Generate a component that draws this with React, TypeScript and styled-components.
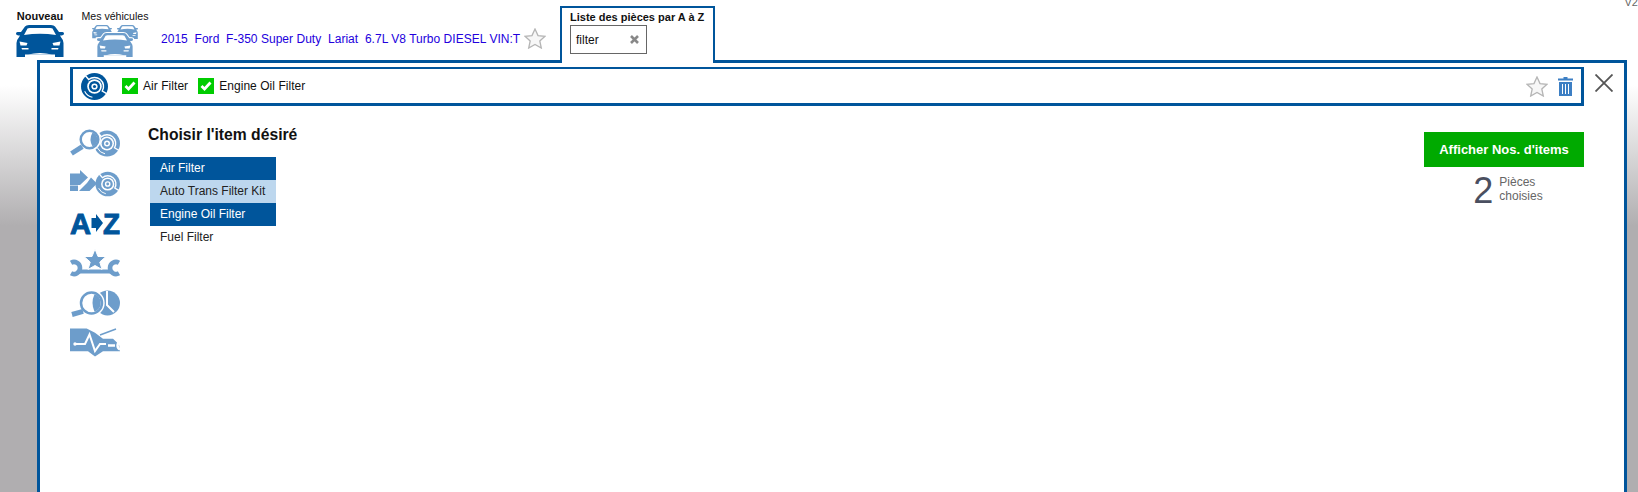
import React from "react"
import styled, { createGlobalStyle } from "styled-components"

const BLUE = "#00559b"
const MID = "#6d9dcb"

const GlobalStyle = createGlobalStyle`
    html, body, #root {
        height: 100%;
        margin: 0;
    }
    body {
        overflow: hidden;
        font-family: "Liberation Sans", Arial, sans-serif;
        color: #111;
        background: linear-gradient(#fff 85px, #b0aeb0 226px) no-repeat #b0aeb0;
    }
`

const Page = styled.div`
    display: flex;
    flex-direction: column;
    height: 100%;
    box-sizing: border-box;
    padding-right: 11px;
`

const Header = styled.header`
    display: flex;
    align-items: flex-start;
    height: 60px;
    margin-right: -11px;
    padding: 0 11px 0 16px;
    background: #fff;
    position: relative;
`

const NavItem = styled.div<{ $width: number; $gap: number }>`
    display: flex;
    flex-direction: column;
    align-items: center;
    width: ${p => p.$width}px;
    margin-right: ${p => p.$gap}px;
    padding-top: 10px;
    font-size: 11px;
    line-height: 13px;
    white-space: nowrap;
`

const NavLabel = styled.span<{ $bold?: boolean }>`
    font-weight: ${p => (p.$bold ? "bold" : "normal")};
    font-size: ${p => (p.$bold ? 11 : 10.6)}px;
    margin-bottom: 1px;
`

const NavIcon = styled.svg<{ $offset?: number }>`
    display: block;
    margin-top: ${p => p.$offset ?? 0}px;
`

const Vehicle = styled.div`
    display: flex;
    align-items: center;
    gap: 4px;
    width: 399px;
    height: 20px;
    margin-top: 28px;
`

const VehicleLink = styled.a`
    padding-top: 2px;
    color: #2200dd;
    font-size: 12px;
    letter-spacing: 0.03px;
    white-space: pre;
    text-decoration: none;
`

const SearchTab = styled.div`
    box-sizing: border-box;
    width: 155px;
    height: 57px;
    margin-top: 6px;
    padding: 3px 0 0 8px;
    border: solid ${BLUE};
    border-width: 2px 2px 0;
    background: #fff;
    position: relative;
    z-index: 1;
`

const TabLabel = styled.div`
    font-size: 11px;
    line-height: 13px;
    font-weight: bold;
    white-space: nowrap;
    margin-bottom: 1px;
`

const SearchBox = styled.div`
    box-sizing: border-box;
    display: flex;
    align-items: center;
    justify-content: space-between;
    width: 77px;
    height: 29px;
    padding: 0 7px 0 5px;
    border: 1px solid #666;
    font-size: 12px;
`

const Version = styled.span`
    position: absolute;
    top: -4px;
    right: -6px;
    font-size: 11px;
    line-height: 13px;
    color: #666;
`

const Panel = styled.main`
    flex: 1;
    box-sizing: border-box;
    margin-left: 37px;
    padding: 4px 40px 0 30px;
    border: solid ${BLUE};
    border-width: 3px 3px 0;
    background: #fff;
    position: relative;
`

const Toolbar = styled.div`
    box-sizing: border-box;
    display: flex;
    align-items: center;
    width: 100%;
    height: 39px;
    padding: 0 8px;
    border: solid ${BLUE};
    border-width: 2px 3px 3px;
`

const BrakeMark = styled.svg`
    margin-right: 13px;
`

const Chip = styled.span`
    display: flex;
    align-items: center;
    gap: 5px;
    margin-right: 10px;
    font-size: 12px;
    letter-spacing: 0.05px;
`

const CheckBox = styled.span`
    display: inline-flex;
    align-items: center;
    justify-content: center;
    width: 16px;
    height: 16px;
    background: #00cc00;
`

const ToolbarActions = styled.div`
    display: flex;
    align-items: center;
    gap: 10px;
    margin-left: auto;
`

const CloseButton = styled.button`
    position: absolute;
    top: 11px;
    right: 11px;
    padding: 0;
    border: 0;
    background: none;
    line-height: 0;
`

const Body = styled.div`
    display: flex;
    align-items: flex-start;
    padding-top: 17px;
`

const IconRail = styled.nav`
    display: flex;
    flex-direction: column;
    width: 50px;
    margin-right: 28px;
`

const RailIcon = styled.svg`
    display: block;
    width: 50px;
    height: 40px;
`

const Chooser = styled.section`
    flex: 1;
`

const Title = styled.h2`
    margin: 2px 0 12px;
    font-size: 15.7px;
    line-height: 20px;
    font-weight: bold;
`

const ItemList = styled.ul`
    width: 126px;
    margin: 0 0 0 2px;
    padding: 0;
    list-style: none;
`

const Item = styled.li<{ $state?: "selected" | "hover" }>`
    height: 23px;
    padding-left: 10px;
    font-size: 12px;
    line-height: 23px;
    white-space: nowrap;
    color: ${p => (p.$state === "selected" ? "#fff" : "#222")};
    background: ${p =>
        p.$state === "selected" ? BLUE : p.$state === "hover" ? "#bdd7ee" : "transparent"};
`

const Summary = styled.aside`
    display: flex;
    flex-direction: column;
    align-items: center;
    width: 160px;
    padding-top: 9px;
`

const ShowButton = styled.button`
    width: 160px;
    height: 35px;
    padding: 0;
    border: 0;
    background: #00aa00;
    color: #fff;
    font: bold 13px "Liberation Sans", Arial, sans-serif;
`

const Count = styled.div`
    display: flex;
    align-items: center;
    gap: 6px;
    margin-top: 8px;
    margin-left: 8px;
    color: #666;
    font-size: 12px;
    line-height: 14px;
`

const CountNumber = styled.span`
    font-size: 36px;
    line-height: 32px;
    color: #4a4f60;
`

const CountLabel = styled.span`
    margin-bottom: 4px;
`

const Car = ({ x = 0, y = 0, w = 48, color = BLUE, outlined = false }: { x?: number; y?: number; w?: number; color?: string; outlined?: boolean }) => (
    <g transform={`translate(${x} ${y}) scale(${w / 48})`}>
        <path
            fill={color}
            stroke={outlined ? "#fff" : "none"}
            strokeWidth={outlined ? 2.5 : 0}
            paintOrder="stroke"
            d="M9 1.5Q10 0 13 0H35Q38 0 39 1.5L43 7H46.5Q48 7 48 8.5Q48 10.5 44 10.5L45.5 13Q47.5 15 47.5 18V32H39V29.5H9V32H.5V18Q.5 15 2.5 13L4 10.5Q0 10.5 0 8.5Q0 7 1.5 7H5Z"
        />
        <path fill="#fff" d="M11.5 3.5Q12 3 14 3H34Q36 3 36.5 3.5L40 10Q24 7.5 8 10Z" />
        <path fill="#fff" d="M3.5 16.5L11.5 18L10.5 20.5H4.5ZM44.5 16.5L36.5 18L37.5 20.5H43.5ZM5.5 23H12.5V24.5H6ZM42.5 23H35.5V24.5H42Z" />
        <path fill="#fff" d="M12 29.5Q24 26.5 36 29.5Z" />
    </g>
)

const Star = () => (
    <svg width="22" height="21" viewBox="0 0 22 21">
        <path
            d="M11 1L14 7.6L21 8.3L15.8 13L17.3 20L11 16.4L4.7 20L6.2 13L1 8.3L8 7.6Z"
            fill="#f7f7f7"
            stroke="#b5b5b5"
            strokeWidth="1.3"
        />
    </svg>
)

// brake disc with its caliper, drawn for r = 13 and scaled
const Disc = ({ cx, cy, r, color }: { cx: number; cy: number; r: number; color: string }) => (
    <g transform={`translate(${cx} ${cy}) scale(${r / 13})`}>
        <circle r="13" fill={color} />
        <path d="M-8.7 -10.3L-5.6 -6.7A8.7 8.7 0 0 1 7.5 4.35L11.7 6.75" fill="none" stroke="#fff" strokeWidth="1.4" />
        <path d="M-9.5 4.5A10.5 10.5 0 0 0 -2 10.3" fill="none" stroke="#fff" strokeWidth="1" />
        <circle r="7" fill="#fff" />
        <circle r="5.4" fill={color} />
        <circle r="3" fill="#fff" />
        <circle r="1.5" fill={color} />
    </g>
)

type LensProps = { cx: number; cy: number; r: number; ex: number; ey: number }

const Lens = ({ cx, cy, r, ex, ey }: LensProps) => (
    <g>
        <circle cx={cx} cy={cy} r={r + 1.5} fill="#fff" />
        <circle cx={cx} cy={cy} r={r - 1.2} fill="#fff" stroke={MID} strokeWidth="2.5" />
        <path
            d={`M${cx + 3} ${cy - r + 3}A${r - 2.5} ${r - 2.5} 0 0 1 ${cx + 3} ${cy + r - 3}Q${cx - 1} ${cy} ${cx + 3} ${cy - r + 3}Z`}
            fill={MID}
        />
        <path d={`M${cx - r * 0.72} ${cy + r * 0.72}L${ex} ${ey}`} stroke={MID} strokeWidth="5" />
    </g>
)

const InspectBrakeIcon = () => (
    <RailIcon viewBox="0 0 50 40">
        <g transform="translate(0 6.5)">
            <Disc cx={37} cy={14} r={13} color={MID} />
            <Lens cx={19.5} cy={10} r={10} ex={1.5} ey={24} />
        </g>
    </RailIcon>
)

const ArrowBrakeIcon = () => (
    <RailIcon viewBox="0 0 50 40">
        <g transform="translate(0 7)" fill={MID}>
            <Disc cx={37.7} cy={14} r={12.3} color={MID} />
            <path d="M0 3.5H10V0L18 7.5L10 15H0Z" />
            <path d="M0 15.5H8V21H0ZM9 21L17 13L21 7.5L27 13.5L19.5 21Z" />
        </g>
    </RailIcon>
)

const AzIcon = () => (
    <RailIcon viewBox="0 0 50 40">
        <g fill={BLUE} stroke={BLUE} strokeWidth="1" fontFamily="'Liberation Sans', Arial, sans-serif" fontWeight="bold" fontSize="30">
            <text x="0" y="31" textLength="21" lengthAdjust="spacingAndGlyphs">A</text>
            <text x="33" y="31" textLength="17" lengthAdjust="spacingAndGlyphs">Z</text>
        </g>
        <path d="M21.5 15H26V11L33 20L26 29V25H21.5Z" fill={BLUE} />
    </RailIcon>
)

const WrenchStarIcon = () => (
    <RailIcon viewBox="0 0 50 40">
        <g transform="translate(0 6)">
            <path d="M9 22.5H41" stroke={MID} strokeWidth="4" />
            <path d="M1 13.8A6 6 0 1 1 1 24.2" fill="none" stroke={MID} strokeWidth="4.6" />
            <path d="M49 13.8A6 6 0 1 0 49 24.2" fill="none" stroke={MID} strokeWidth="4.6" />
            <path
                d="M25 0L28 7.5H36L29.8 13L32 20.5L25 16.5L18 20.5L20.2 13L14 7.5H22Z"
                fill={MID}
                stroke="#fff"
                strokeWidth="1"
            />
        </g>
    </RailIcon>
)

const ClockIcon = () => (
    <RailIcon viewBox="0 0 50 40">
        <g transform="translate(0 7)">
            <circle cx="37.5" cy="13" r="12.5" fill={MID} />
            <path d="M37 1V15L44 22" fill="none" stroke="#fff" strokeWidth="2" />
            <Lens cx={21.5} cy={13} r={11.7} ex={2} ey={24.5} />
        </g>
    </RailIcon>
)

const DiagnosticIcon = () => (
    <RailIcon viewBox="0 0 50 40">
        <g transform="translate(0 5.5)">
            <path fill={MID} d="M0 0H16.7L25 4.3L33 10.3H43L49 16L50 22.7H33L25 28L18 22.7H0Z" />
            <path d="M30 6.5L46 .5" stroke={MID} strokeWidth="1.5" />
            <path d="M6 15.5H15L19.5 6L25 22.5L30 15.5H36" fill="none" stroke="#fff" strokeWidth="2" />
            <circle cx="5" cy="15.5" r="1.7" fill="#fff" />
            <path d="M38 17H45" stroke="#fff" strokeWidth="2.5" />
            <path d="M50 13A4.5 4.5 0 0 0 50 21" fill="none" stroke="#fff" strokeWidth="2.5" />
        </g>
    </RailIcon>
)

const selectedItems = ["Air Filter", "Engine Oil Filter"]

const items: { label: string; state?: "selected" | "hover" }[] = [
    { label: "Air Filter", state: "selected" },
    { label: "Auto Trans Filter Kit", state: "hover" },
    { label: "Engine Oil Filter", state: "selected" },
    { label: "Fuel Filter" },
]

export default function App() {
    return (
        <>
            <GlobalStyle />
            <Page>
                <Header>
                    <NavItem $width={48} $gap={18}>
                        <NavLabel $bold>Nouveau</NavLabel>
                        <NavIcon $offset={1} width="48" height="33" viewBox="0 0 48 33">
                            <Car />
                        </NavIcon>
                    </NavItem>
                    <NavItem $width={66} $gap={13}>
                        <NavLabel>Mes véhicules</NavLabel>
                        <NavIcon width="48" height="34" viewBox="0 0 48 34">
                            <Car x={1} y={1} w={20} color={MID} />
                            <Car x={26} y={1} w={21} color={MID} />
                            <Car x={6} y={9} w={36} color={MID} outlined />
                        </NavIcon>
                    </NavItem>
                    <Vehicle>
                        <VehicleLink>{"2015\u00a0 Ford\u00a0 F-350 Super Duty\u00a0 Lariat\u00a0 6.7L V8 Turbo DIESEL VIN:T"}</VehicleLink>
                        <Star />
                    </Vehicle>
                    <SearchTab>
                        <TabLabel>Liste des pièces par A à Z</TabLabel>
                        <SearchBox>
                            <span>filter</span>
                            <svg width="9" height="9" viewBox="0 0 9 9">
                                <path d="M1 1L8 8M8 1L1 8" stroke="#888" strokeWidth="2.6" />
                            </svg>
                        </SearchBox>
                    </SearchTab>
                    <Version>V21</Version>
                </Header>
                <Panel>
                    <Toolbar>
                        <BrakeMark width="28" height="27" viewBox="0 0 28 27">
                            <Disc cx={13.5} cy={13.5} r={13.5} color={BLUE} />
                        </BrakeMark>
                        {selectedItems.map(label => (
                            <Chip key={label}>
                                <CheckBox>
                                    <svg width="12" height="10" viewBox="0 0 12 10">
                                        <path d="M1.5 5L4.5 8L10.5 1.5" fill="none" stroke="#fff" strokeWidth="2.8" />
                                    </svg>
                                </CheckBox>
                                {label}
                            </Chip>
                        ))}
                        <ToolbarActions>
                            <Star />
                            <svg width="15" height="19" viewBox="0 0 15 19">
                                <path
                                    fillRule="evenodd"
                                    fill="#3d7fc4"
                                    d="M5.5 0H9.5V1.5H15V3.5H0V1.5H5.5ZM1 5H14V19H1ZM4 7V17H5V7ZM7 7V17H8V7ZM10 7V17H11V7Z"
                                />
                            </svg>
                        </ToolbarActions>
                    </Toolbar>
                    <CloseButton aria-label="Fermer">
                        <svg width="18" height="18" viewBox="0 0 18 18">
                            <path d="M.5 .5L17.5 17.5M17.5 .5L.5 17.5" stroke="#555" strokeWidth="1.8" />
                        </svg>
                    </CloseButton>
                    <Body>
                        <IconRail>
                            <InspectBrakeIcon />
                            <ArrowBrakeIcon />
                            <AzIcon />
                            <WrenchStarIcon />
                            <ClockIcon />
                            <DiagnosticIcon />
                        </IconRail>
                        <Chooser>
                            <Title>Choisir l'item désiré</Title>
                            <ItemList>
                                {items.map(item => (
                                    <Item key={item.label} $state={item.state}>
                                        {item.label}
                                    </Item>
                                ))}
                            </ItemList>
                        </Chooser>
                        <Summary>
                            <ShowButton>Afficher Nos. d'items</ShowButton>
                            <Count>
                                <CountNumber>2</CountNumber>
                                <CountLabel>
                                    Pièces
                                    <br />
                                    choisies
                                </CountLabel>
                            </Count>
                        </Summary>
                    </Body>
                </Panel>
            </Page>
        </>
    )
}
